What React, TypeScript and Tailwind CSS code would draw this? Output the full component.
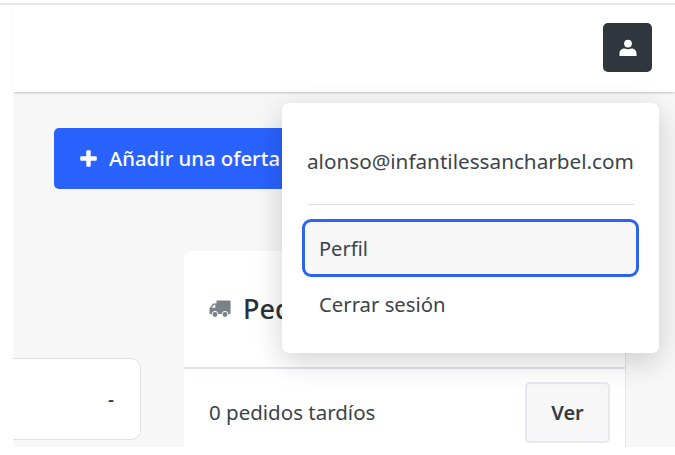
export default function App() {
  return (
    <div className="relative flex h-[455px] w-[675px] flex-col overflow-hidden bg-white font-['Noto_Sans',sans-serif] text-[#343a40]">
      <div className="box-content h-[3px] shrink-0 border-b-2 border-[#e6e6e6]" />
      <header className="z-10 ml-[13px] flex h-[87px] shrink-0 items-start justify-end bg-white pt-[18px] pr-[23px] shadow-[0_2px_2px_-1px_rgba(0,0,0,0.22)]">
        <button className="flex h-[49px] w-[49px] items-center justify-center rounded-[5px] bg-[#2f363e]">
          <svg width="18" height="18" viewBox="0 0 18 18" fill="white">
            <circle cx="9" cy="4.6" r="3.9" />
            <path d="M0.5 17 V14.4 C0.5 11.6 3 9.6 5.6 9.6 C7.5 10.6 10.5 10.6 12.4 9.6 C15 9.6 17.5 11.6 17.5 14.4 V17 Z" />
          </svg>
        </button>
      </header>
      <div className="flex h-[355px] shrink-0">
        <div className="w-[13px] shrink-0 bg-white" />
        <main className="flex-1 overflow-hidden bg-[#f7f7f8]">
          <div className="pt-[36px] pl-[41px]">
            <button className="flex h-[61px] w-[300px] items-center gap-[12px] rounded-[5px] bg-[#2962ff] pl-[26px] text-[20.3px] font-medium text-white">
              <svg width="17" height="17" viewBox="0 0 17 17" fill="white">
                <path d="M6.3 1.2 A1 1 0 0 1 7.3 0.2 H9.7 A1 1 0 0 1 10.7 1.2 V6.3 H15.8 A1 1 0 0 1 16.8 7.3 V9.7 A1 1 0 0 1 15.8 10.7 H10.7 V15.8 A1 1 0 0 1 9.7 16.8 H7.3 A1 1 0 0 1 6.3 15.8 V10.7 H1.2 A1 1 0 0 1 0.2 9.7 V7.3 A1 1 0 0 1 1.2 6.3 H6.3 Z" />
              </svg>
              <span className="whitespace-nowrap">Añadir una oferta</span>
            </button>
          </div>
          <div className="mt-[62px] flex items-start">
            <div className="mt-[107px] -ml-[60px] flex h-[82px] w-[188px] items-center justify-end rounded-[10px] border border-[#dfe3e8] bg-white pr-[26px] text-[19px] font-medium">
              -
            </div>
            <section className="ml-[43px] w-[442px] rounded-t-[8px] border-r border-[#e3e6ea] bg-white">
              <div className="flex h-[118px] items-center gap-[12px] border-b-2 border-[#dfe3e8] pl-[25px]">
                <svg width="22" height="18" viewBox="0 0 22 18" fill="#7b8187">
                  <path d="M7.5 0.5 H21.5 V14 H19 A3 3 0 0 0 13 14 H9 A3 3 0 0 0 3 14 H0.5 V8.5 L4 3.5 H7.5 Z" />
                  <circle cx="6" cy="14.5" r="2.4" />
                  <circle cx="16" cy="14.5" r="2.4" />
                  <path d="M2.6 7.8 L5 4.8 H6.3 V7.8 Z" fill="#ffffff" />
                </svg>
                <h2 className="text-[27px] font-medium whitespace-nowrap text-[#2b3138]">Pedidos</h2>
              </div>
              <div className="flex h-[88px] items-start justify-between pt-[13px] pr-[15px] pl-[25px]">
                <span className="pt-[17px] text-[20.5px] leading-[26px] text-[#3d4349]">0 pedidos tardíos</span>
                <button className="flex h-[61px] w-[85px] items-center justify-center rounded-[5px] border-2 border-[#e5e8ec] bg-[#f7f7f8] text-[20px] font-semibold">
                  Ver
                </button>
              </div>
            </section>
          </div>
        </main>
      </div>
      <div className="absolute top-[103px] left-[282px] z-20 h-[250px] w-[377px] rounded-[7px] bg-white px-[25px] shadow-[0_8px_30px_rgba(0,0,0,0.18)]">
        <div className="flex h-[102px] items-center border-b border-[#dcdfe2] pt-[16px] text-[20.7px] whitespace-nowrap text-[#3d4349]">
          alonso@infantilessancharbel.com
        </div>
        <div className="-mx-[5px] mt-[14px] flex h-[58px] items-center rounded-[9px] border-[3px] border-[#2c64ec] bg-[#f7f7f8] pt-[2px] pl-[14px] text-[20px] text-[#3d4349]">
          Perfil
        </div>
        <div className="-mx-[5px] flex h-[55px] items-center pl-[17px] text-[20.3px] text-[#3d4349]">Cerrar sesión</div>
      </div>
    </div>
  );
}
